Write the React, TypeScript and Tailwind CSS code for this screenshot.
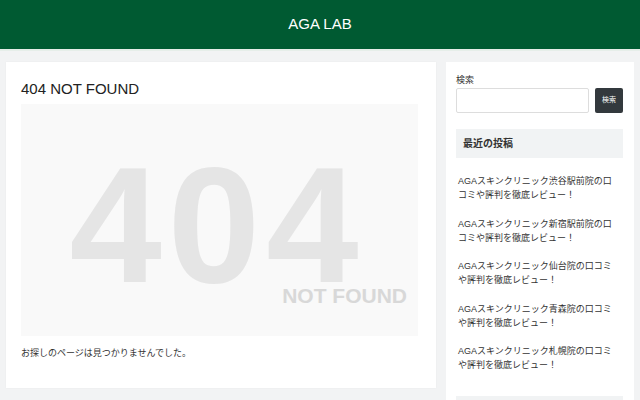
import React from "react";

const posts = [
  "AGAスキンクリニック渋谷駅前院の口コミや評判を徹底レビュー！",
  "AGAスキンクリニック新宿駅前院の口コミや評判を徹底レビュー！",
  "AGAスキンクリニック仙台院の口コミや評判を徹底レビュー！",
  "AGAスキンクリニック青森院の口コミや評判を徹底レビュー！",
  "AGAスキンクリニック札幌院の口コミや評判を徹底レビュー！",
];

const font = "font-['Liberation_Sans','Noto_Sans_CJK_JP',sans-serif]";

const App = () => {
  return (
    <div className={`min-h-[400px] h-[400px] overflow-hidden bg-[#f2f3f4] ${font}`}>
      {/* header */}
      <header className="h-[51px] bg-[#005a32] border-b-2 border-[#e6eee9] flex items-center justify-center">
        <p className="text-white text-[15px] leading-none pb-[3px]">AGA LAB</p>
      </header>

      <div className="flex gap-[10px] px-[6px] pt-[11px]">
        {/* main column */}
        <main className="w-[430px] h-[326px] bg-white px-[15px] pt-[15px] pb-[28px] shadow-[0_0_2px_rgba(0,0,0,0.04)]">
          <h1 className="text-[15px] leading-[24px] text-[#222]">404 NOT FOUND</h1>
          <div className="mt-[3px] w-[397px] h-[232px] bg-[#f9f9f9] flex flex-col pt-[59px] overflow-hidden">
            <div className="self-center text-[166px] leading-[0.75] tracking-[6px] font-bold text-[#e5e5e5] pr-[5px]">
              404
            </div>
            <div className="self-end mr-[11px] text-[21px] leading-[15px] font-bold text-[#d8d8d8]">
              NOT FOUND
            </div>
          </div>
          <p className="mt-[10px] text-[9px] leading-[14px] text-[#333]">
            お探しのページは見つかりませんでした。
          </p>
        </main>

        {/* sidebar */}
        <aside className="w-[188px] h-[400px] bg-white pl-[10px] pr-[11px] pt-[11px]">
          <label className="block text-[9px] leading-[14px] text-[#333]">検索</label>
          <div className="flex gap-[6px] mt-[1px]">
            <input className="w-[133px] h-[25px] border border-[#ddd] rounded-[2px] bg-white" />
            <button className="w-[29px] h-[25px] rounded-[2px] bg-[#33393d] text-white text-[7px]">
              検索
            </button>
          </div>

          <div className="mt-[16px] h-[29px] bg-[#f1f3f4] flex items-center px-[7px]">
            <h2 className="text-[10px] font-bold text-[#333]">最近の投稿</h2>
          </div>

          <ul className="mt-[16px] flex flex-col gap-[14.5px] pl-[2px] pr-[6px]">
            {posts.map((p) => (
              <li key={p} className="text-[9px] leading-[14px] text-[#333]">
                {p}
              </li>
            ))}
          </ul>

          <div className="mt-[24px] h-[29px] bg-[#f1f3f4]" />
        </aside>
      </div>
    </div>
  );
};

export default App;
